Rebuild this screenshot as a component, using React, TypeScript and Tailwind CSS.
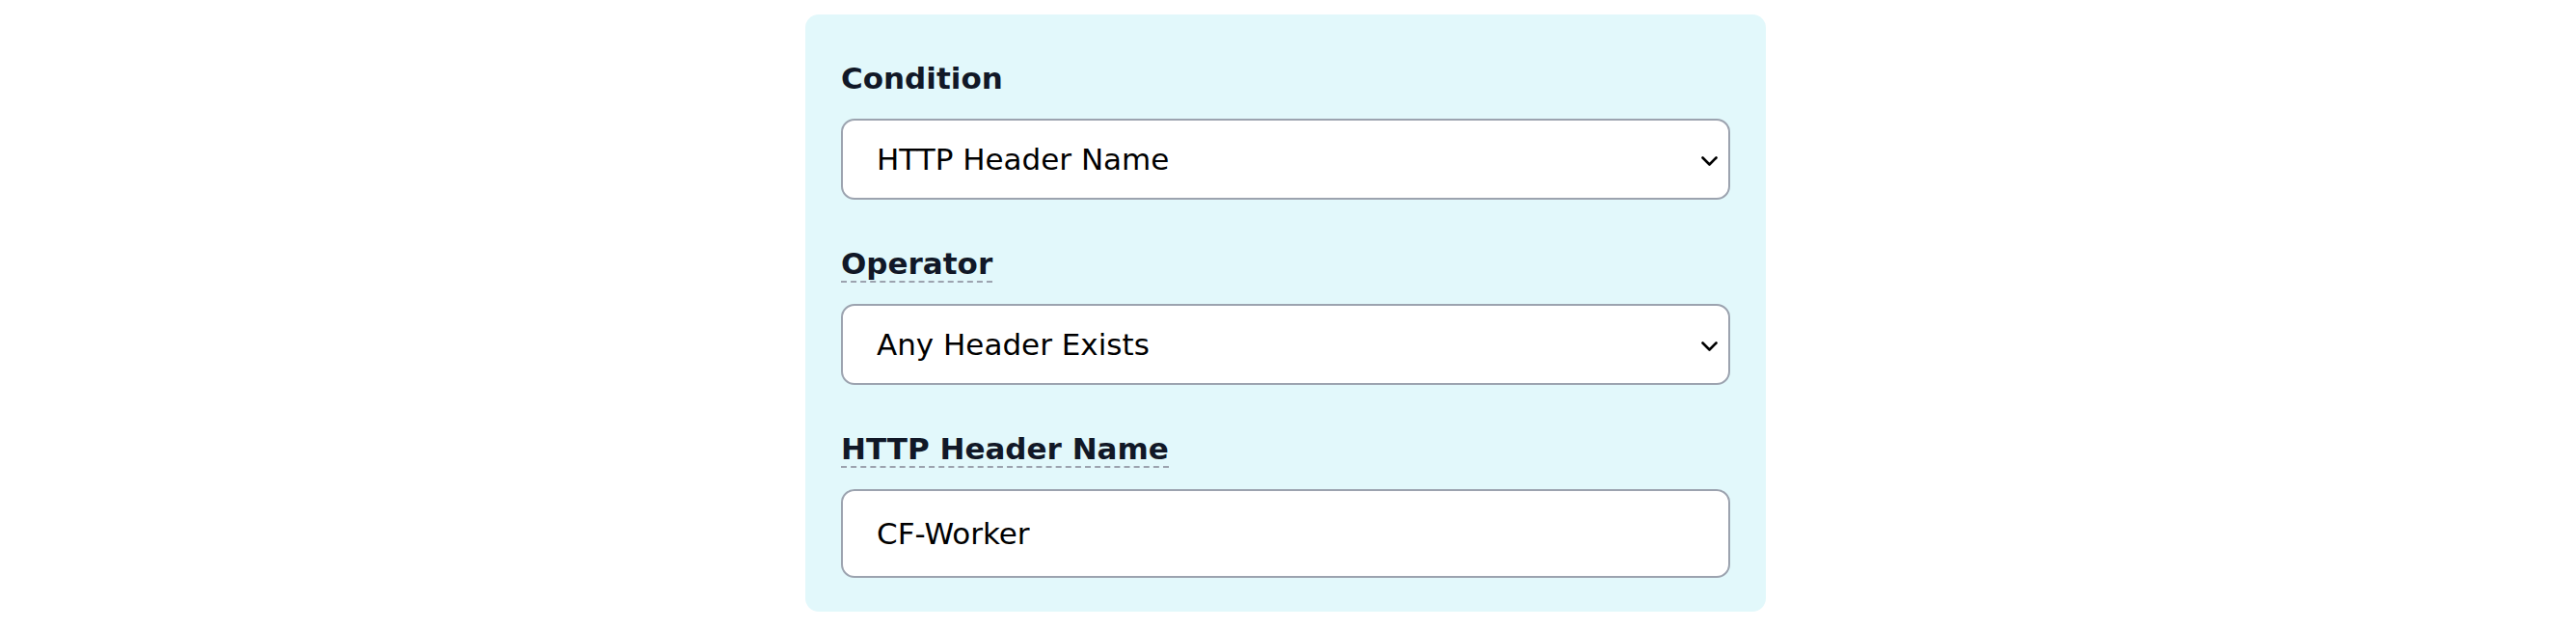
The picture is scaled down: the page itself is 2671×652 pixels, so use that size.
import { useState } from 'react';

function Chevron() {
  return (
    <svg
      width="17"
      height="11"
      viewBox="0 0 17 11"
      fill="none"
      stroke="currentColor"
      strokeWidth="2.6"
      strokeLinecap="round"
      strokeLinejoin="round"
      className="pointer-events-none absolute right-[13px] top-1/2 -translate-y-[3px] text-black"
    >
      <polyline points="1.5,1.5 8.5,8.5 15.5,1.5" />
    </svg>
  );
}

function FieldLabel({ children, hint }: { children: string; hint?: boolean }) {
  return (
    <div className="mb-[22px]">
      <span
        className={
          'inline-block border-b-2 border-dashed text-[31px] leading-[36px] font-bold text-[#111827] ' +
          (hint ? 'border-[#9ca3af] cursor-help' : 'border-transparent')
        }
      >
        {children}
      </span>
    </div>
  );
}

export default function App() {
  const [condition, setCondition] = useState('http_header_name');
  const [operator, setOperator] = useState('any_exists');
  const [header, setHeader] = useState('CF-Worker');

  return (
    <div className="min-h-screen bg-white pt-[15px] pr-[5px] font-['DejaVu_Sans','Noto_Sans',sans-serif]">
      <div className="mx-auto w-[996px] rounded-[14px] bg-[#e2f8fb] px-[37px] pt-[48px] pb-[35px]">
        <div>
          <FieldLabel>Condition</FieldLabel>
          <div className="relative">
            <select
              value={condition}
              onChange={(e) => setCondition(e.target.value)}
              className="h-[84px] w-full appearance-none rounded-[14px] border-2 border-[#9ca3af] bg-white pl-[35px] pr-[48px] text-[31px] text-black outline-none"
            >
              <option value="http_header_name">HTTP Header Name</option>
              <option value="ip_address">IP Address</option>
              <option value="user_agent">User Agent</option>
            </select>
            <Chevron />
          </div>
        </div>

        <div className="mt-[48px]">
          <FieldLabel hint>Operator</FieldLabel>
          <div className="relative">
            <select
              value={operator}
              onChange={(e) => setOperator(e.target.value)}
              className="h-[84px] w-full appearance-none rounded-[14px] border-2 border-[#9ca3af] bg-white pl-[35px] pr-[48px] text-[31px] text-black outline-none"
            >
              <option value="any_exists">Any Header Exists</option>
              <option value="equals">Equals</option>
              <option value="contains">Contains</option>
            </select>
            <Chevron />
          </div>
        </div>

        <div className="mt-[48px]">
          <FieldLabel hint>HTTP Header Name</FieldLabel>
          <input
            type="text"
            value={header}
            onChange={(e) => setHeader(e.target.value)}
            className="h-[92px] w-full rounded-[14px] border-2 border-[#9ca3af] bg-white px-[35px] text-[31px] text-black outline-none"
          />
        </div>
      </div>
    </div>
  );
}
